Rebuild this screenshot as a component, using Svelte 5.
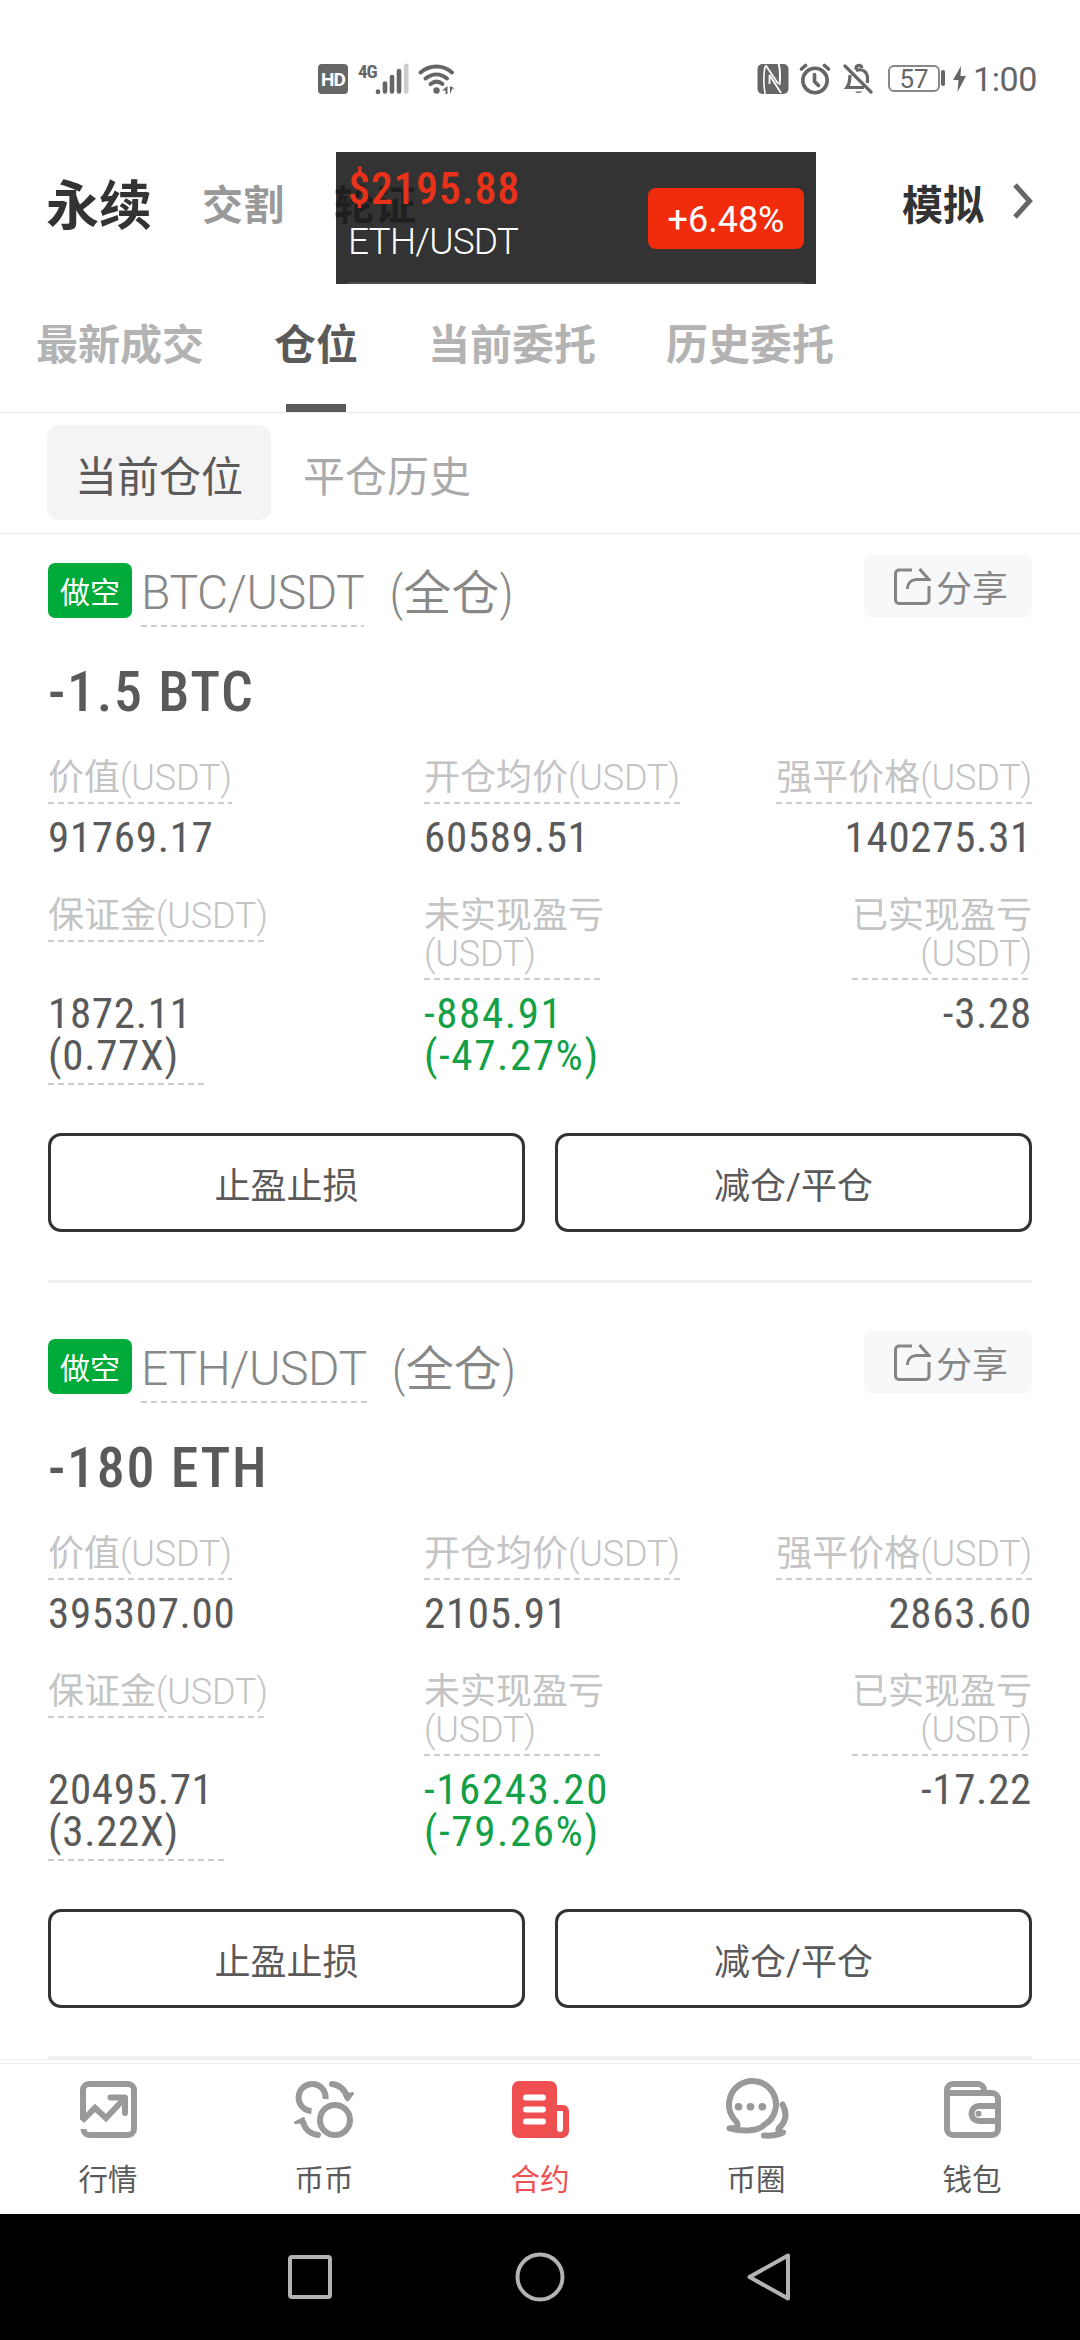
<script lang="ts">
  interface Field {
    label: string;
    wrap?: boolean;
    value: string;
    extra?: string;
    line?: number;
    down?: boolean;
  }

  interface Position {
    pair: string;
    size: string;
    fields: Field[];
  }

  const positions: Position[] = [
    {
      pair: 'BTC/USDT',
      size: '-1.5 BTC',
      fields: [
        { label: '价值', value: '91769.17' },
        { label: '开仓均价', value: '60589.51' },
        { label: '强平价格', value: '140275.31' },
        { label: '保证金', value: '1872.11', extra: '(0.77X)', line: 157 },
        { label: '未实现盈亏', wrap: true, value: '-884.91', extra: '(-47.27%)', down: true },
        { label: '已实现盈亏', wrap: true, value: '-3.28' }
      ]
    },
    {
      pair: 'ETH/USDT',
      size: '-180 ETH',
      fields: [
        { label: '价值', value: '395307.00' },
        { label: '开仓均价', value: '2105.91' },
        { label: '强平价格', value: '2863.60' },
        { label: '保证金', value: '20495.71', extra: '(3.22X)', line: 176 },
        { label: '未实现盈亏', wrap: true, value: '-16243.20', extra: '(-79.26%)', down: true },
        { label: '已实现盈亏', wrap: true, value: '-17.22' }
      ]
    }
  ];

  const tabs = ['最新成交', '仓位', '当前委托', '历史委托'];
  const navItems = ['行情', '币币', '合约', '币圈', '钱包'];

  let activeTab = $state('仓位');
  let activeNav = $state('合约');
</script>

<div class="screen">
  <div class="status">
    <div class="status-left">
      <span class="hd">HD</span>
      <span class="net">4G</span>
      <svg class="signal" width="35" height="32" viewBox="0 0 35 32" fill="none" stroke-width="4.6" stroke-linecap="round">
        <path d="M3 28.5v.4M10 20.500v8M17 14v14.500M24 8v20.500" stroke="#666" />
        <path d="M31.200 2.800v25.700" stroke="#ccc" />
      </svg>
      <svg class="wifi" width="40" height="32" viewBox="0 0 40 32" fill="none" stroke="#666" stroke-width="4" stroke-linecap="round">
        <path d="M3.500 9.500C13 1.500 26 1.500 35 9.500M8.500 15.500c7-5.500 15-5.500 21.500 0M13.500 21c4-3 8.500-3 12 0" />
        <circle cx="19.500" cy="27.500" r="3.200" fill="#666" stroke="none" />
        <path d="M30.500 23v8h-2v-3.500h-3.500zM33 23l5 2.500h-2.500L33 31z" fill="#666" stroke="none" />
      </svg>
    </div>
    <div class="status-right">
      <svg width="32" height="32" viewBox="0 0 32 32" fill="none" stroke="#fff">
        <rect x=".5" y="1" width="31" height="30" rx="5" fill="#666" stroke="none" />
        <path d="M8 3.500C6.500 11 6.500 21 8 31" stroke-width="1.600" />
        <path d="M8.500 2L21 20.500" stroke-width="1.800" />
        <path d="M21.500 0C24 9 23 16 22.500 22" stroke-width="2" />
        <path d="M12.500 12L24 30M12.500 12v9" stroke-width="1.800" />
      </svg>
      <svg class="alarm" width="32" height="32" viewBox="0 0 32 32" fill="none" stroke="#666" stroke-width="3.600" stroke-linecap="round">
        <circle cx="16" cy="17.500" r="12.200" />
        <path d="M15.500 11.500v7l4 4M2.500 6l4-3.500M29.500 6l-4-3.500" />
      </svg>
      <svg class="bell" width="30" height="32" viewBox="0 0 30 32" fill="none" stroke="#666" stroke-width="3.200">
        <path d="M2 3l26 26" stroke-linecap="round" />
        <path d="M13 7.500c7-2.500 11.500 2 11.500 7.500v5M7 12c-.5 6 0 8.500-3 12.500h17M13 6.500c-.5-5 5.500-5.500 6-1.500" />
        <path d="M12 28.500a4 3 0 0 0 7 0z" fill="#666" stroke="none" />
      </svg>
      <span class="battery">57</span>
      <span class="nub"></span>
      <svg class="bolt" width="13" height="26" viewBox="0 0 13 26" fill="#666"><path d="M8 0L0 14h5.500L4.500 26 13 10H7.500z" /></svg>
      <span class="time">1:00</span>
    </div>
  </div>

  <div class="header">
    <span class="mode active">永续</span>
    <span class="mode">交割</span>
    <span class="mode">轮证</span>
    <span class="demo">模拟</span>
    <svg width="20" height="36" viewBox="0 0 20 36" fill="none" stroke="#666" stroke-width="5"><path d="M2 2l14.500 16L2 34" /></svg>

    <!-- Floating price ticker -->
    <div class="ticker">
      <div class="quote">
        <span class="price din">$2195.88</span>
        <span class="symbol">ETH/USDT</span>
      </div>
      <span class="change">+6.48%</span>
    </div>
  </div>

  <div class="tabs">
    {#each tabs as tab}
      <span class="tab" class:active={tab === activeTab}>{tab}</span>
    {/each}
  </div>

  <div class="subtabs">
    <span class="subtab active">当前仓位</span>
    <span class="subtab">平仓历史</span>
  </div>

  <div class="positions">
    {#each positions as position}
      <div class="card">
        <div class="title">
          <span class="side">做空</span>
          <span class="pair dashed">{position.pair}</span>
          <span class="margin-mode">(全仓)</span>
          <span class="share">
            <svg width="38" height="38" viewBox="0 0 38 38" fill="none" stroke="#858585" stroke-width="3">
              <path d="M19 3H6a3.500 3.500 0 0 0-3.500 3.500v26.500A3.500 3.500 0 0 0 6 36.500h26.500a3.500 3.500 0 0 0 3.500-3.500V19" />
              <path d="M14.500 22c0-6 4-9.500 9.500-9.500h12L26.500 2" />
            </svg>
            分享
          </span>
        </div>
        <div class="size din">{position.size}</div>
        <div class="fields">
          {#each position.fields as field}
            <div class="field">
              <div class="label dashed" class:wrap={field.wrap}>
                <span>{field.label}</span><span class="unit">(USDT)</span>
              </div>
              <div class="value din" class:down={field.down} class:dashed={field.line} style:width={field.line ? `${field.line}px` : null}>
                <div>{field.value}</div>
                {#if field.extra}
                  <div>{field.extra}</div>
                {/if}
              </div>
            </div>
          {/each}
        </div>
        <div class="actions">
          <span class="action">止盈止损</span>
          <span class="action">减仓/平仓</span>
        </div>
      </div>
    {/each}
  </div>

  <div class="navbar">
    {#each navItems as item, i}
      <div class="nav" class:active={item === activeNav}>
        <svg width="68" height="64" viewBox="0 0 68 64" fill="none" stroke="#999" stroke-width="6">
          {#if i === 0}
            <path d="M9 43V13a6 6 0 0 1 6-6h39a6 6 0 0 1 6 6v39a6 6 0 0 1-6 6H15a6 6 0 0 1-5.500-6" />
            <path d="M8 44l13-13 11 10 18-19" />
            <path d="M36.500 20.500H51V36" stroke-linecap="round" stroke-linejoin="round" />
          {:else if i === 1}
            <circle cx="45" cy="43" r="15" />
            <path d="M35.500 22A13.500 13.500 0 1 0 21.500 34" />
            <path d="M42 7c8 1 13 6 15 13M28 58c-8-1-13-6-15-13" stroke-linecap="round" />
            <path d="M54.500 18l8-1.500-5 6.500zM13.500 41.500l-8 4 7-.5z" fill="#999" stroke-width="3" stroke-linejoin="round" />
          {:else if i === 2}
            <path d="M13 4h31a7 7 0 0 1 7 7v17h6a6 6 0 0 1 6 6v20a7 7 0 0 1-7 7H13a7 7 0 0 1-7-7V11a7 7 0 0 1 7-7z" fill="#f04f52" stroke="none" />
            <path d="M51 34h6v18a3 3 0 0 1-6 0z" fill="#fff" stroke="none" />
            <path d="M20 20.500h17M20 32.500h17M20 44.500h17" stroke="#fff" stroke-linecap="round" />
          {:else if i === 3}
            <path d="M15 50c1-3 .5-4.500-3-8A23.500 23.500 0 1 1 42 48c-6 6-20 7-34.500 3.300 4 .2 6.500-.3 7.500-1.300z" stroke-linejoin="round" />
            <path d="M60.500 27.500c5 9 3.500 17-3.500 23.500-1.500 2.500 0 4.500 4 4.500-6 3-12 3.500-19 3" stroke-linecap="round" stroke-linejoin="round" />
            <path d="M16.500 29.700h.1M28.400 29.700h.1M40.300 29.700h.1" stroke-width="7.600" stroke-linecap="round" />
          {:else}
            <path d="M9 16h45a6 6 0 0 1 6 6v30a6 6 0 0 1-6 6H15a6 6 0 0 1-6-6V13a6 6 0 0 1 6-6h25a6 6 0 0 1 6 6v3" />
            <path d="M60 29H41a7.500 7.500 0 0 0 0 15h19" />
            <circle cx="40.500" cy="36.700" r="3" fill="#999" stroke="none" />
          {/if}
        </svg>
        <span>{item}</span>
      </div>
    {/each}
  </div>

  <div class="system">
    <svg width="50" height="50" viewBox="0 0 50 50"><rect x="5" y="5" width="40" height="40" rx="2" /></svg>
    <svg width="50" height="50" viewBox="0 0 50 50"><circle cx="25" cy="25" r="22.500" /></svg>
    <svg width="50" height="50" viewBox="0 0 50 50"><path d="M43 3.500v43L4.500 25z" stroke-linejoin="round" /></svg>
  </div>
</div>

<style>
  :global(body) {
    background: #fff;
  }

  .screen {
    display: flex;
    flex-direction: column;
    width: 1080px;
    height: 2340px;
    overflow: hidden;
    font-family: Roboto, 'Noto Sans CJK SC', sans-serif;
    font-weight: 400;
    color: #5a5a5a;
    white-space: nowrap;
  }

  .din {
    font-stretch: 75%;
    letter-spacing: 0.7px;
  }

  svg {
    display: block;
    flex: none;
  }

  .dashed {
    background: repeating-linear-gradient(90deg, #ccc 0 6px, transparent 6px 10px) left bottom / 100% 2px no-repeat;
  }

  .status {
    display: flex;
    justify-content: space-between;
    height: 106px;
    padding: 63px 44px 0 318px;
    box-sizing: border-box;
    color: #666;
  }

  .status-left,
  .status-right {
    display: flex;
    align-items: flex-start;
  }

  .hd {
    width: 30px;
    height: 30px;
    margin-top: 1px;
    border-radius: 4px;
    background: #666;
    color: #fff;
    font-size: 19px;
    font-weight: 700;
    line-height: 31px;
    text-align: center;
    letter-spacing: -1px;
  }

  .net {
    width: 16px;
    margin-left: 10px;
    font-size: 19px;
    font-weight: 700;
    line-height: 17px;
    letter-spacing: -1px;
    font-stretch: 75%;
  }

  .signal {
    margin-left: 1px;
  }

  .wifi {
    margin-left: 7px;
  }

  .alarm {
    margin-left: 10px;
  }

  .bell {
    margin-left: 12px;
  }

  .battery {
    width: 48px;
    height: 23px;
    margin: 2px 0 0 15px;
    border: 2px solid #888;
    border-radius: 6px;
    font-size: 26px;
    line-height: 25px;
    text-align: center;
  }

  .nub {
    width: 4px;
    height: 16px;
    margin: 7px 0 0 1px;
    border-radius: 2px;
    background: #666;
  }

  .bolt {
    margin: 3px 0 0 8px;
  }

  .time {
    margin: 0 -1px 0 7px;
    font-size: 34px;
    line-height: 33px;
    letter-spacing: -0.4px;
  }

  .header {
    position: relative;
    display: flex;
    align-items: center;
    height: 196px;
    padding: 0 47px 0 46px;
  }

  .mode {
    margin: -5px 50px 0 0;
    font-size: 41px;
    font-weight: 700;
    color: #999;
  }

  .mode.active {
    font-size: 53px;
    color: #333;
  }

  .demo {
    margin: -5px 29px 0 auto;
    font-size: 41px;
    font-weight: 700;
    color: #333;
  }

  .header > svg {
    margin-top: -6px;
  }

  .ticker {
    position: absolute;
    top: 46px;
    left: 336px;
    display: flex;
    align-items: center;
    justify-content: space-between;
    width: 480px;
    height: 132px;
    padding: 0 12px;
    box-sizing: border-box;
    background: linear-gradient(#4c4c4c, #4c4c4c) center bottom / 456px 2px no-repeat, rgba(0, 0, 0, 0.8);
    color: #fff;
  }

  .quote {
    display: flex;
    flex-direction: column;
    height: 100%;
  }

  .price {
    margin-top: 11px;
    font-size: 44px;
    font-weight: 500;
    line-height: 52px;
    color: #e93219;
  }

  .symbol {
    font-size: 37px;
    font-weight: 300;
    line-height: 54px;
    letter-spacing: -0.8px;
  }

  .change {
    width: 156px;
    height: 61px;
    border-radius: 8px;
    background: #f02c0c;
    font-size: 36px;
    line-height: 64px;
    text-align: center;
  }

  .tabs {
    display: flex;
    gap: 70px;
    height: 110px;
    padding-left: 36px;
    border-bottom: 1px solid #eaeaea;
  }

  .tab {
    display: flex;
    flex-direction: column;
    align-items: center;
    justify-content: space-between;
    font-size: 42px;
    font-weight: 700;
    line-height: 88px;
    color: #b3b3b3;
  }

  .tab.active {
    color: #5a5a5a;
  }

  .tab.active::after {
    content: '';
    width: 60px;
    height: 8px;
    background: #5a5a5a;
  }

  .subtabs {
    display: flex;
    gap: 4px;
    height: 95px;
    padding: 12px 47px 13px;
    border-bottom: 1px solid #ebebeb;
  }

  .subtab {
    padding: 0 28px;
    border-radius: 12px;
    font-size: 42px;
    line-height: 105px;
    color: #aaa;
  }

  .subtab.active {
    background: #f4f4f4;
    color: #5a5a5a;
  }

  .positions {
    flex: 1;
    padding: 21px 48px 0;
    overflow: hidden;
  }

  .card {
    border-bottom: 3px solid #f0f0f0;
  }

  .card + .card {
    margin-top: 48px;
  }

  .title {
    display: flex;
    height: 72px;
    color: #888;
  }

  .side {
    width: 84px;
    height: 55px;
    margin: 8px 9px 0 0;
    border-radius: 7px;
    background: #00aa3b;
    color: #fff;
    font-size: 30px;
    line-height: 60px;
    text-align: center;
  }

  .pair {
    height: 72px;
    font-size: 48px;
    font-weight: 300;
    line-height: 75px;
    letter-spacing: -0.4px;
  }

  .margin-mode {
    margin-left: 25px;
    font-size: 48px;
    font-stretch: 75%;
    font-weight: 350;
    line-height: 77px;
  }

  .share {
    display: flex;
    align-items: center;
    gap: 5px;
    width: 139px;
    height: 62px;
    margin-left: auto;
    padding-left: 29px;
    border-radius: 8px;
    background: #f6f8fa;
    font-size: 36px;
  }

  .size {
    font-size: 56px;
    font-weight: 500;
    line-height: 130px;
    height: 128px;
    letter-spacing: 1.7px;
  }

  .fields {
    display: grid;
    grid-template-columns: 376px 1fr 300px;
    row-gap: 39px;
    padding-top: 4px;
  }

  .field {
    display: flex;
    flex-direction: column;
    align-items: flex-start;
    justify-content: space-between;
  }

  .field:nth-child(3n) {
    align-items: flex-end;
    text-align: right;
  }

  .field:nth-child(n + 5) {
    justify-content: flex-start;
  }

  .label {
    display: flex;
    padding-bottom: 7px;
    font-size: 36px;
    line-height: 38px;
    color: #c4c4c4;
  }

  .label.wrap,
  .label.wrap span {
    display: block;
  }

  .unit {
    font-weight: 300;
    letter-spacing: -0.2px;
  }

  .value {
    margin-top: 12px;
    font-size: 43px;
    line-height: 42px;
  }

  .value.dashed,
  .value.down {
    padding-bottom: 9px;
  }

  .value.down {
    color: #13a047;
    letter-spacing: 1.6px;
  }

  .actions {
    display: grid;
    grid-template-columns: 1fr 1fr;
    gap: 30px;
    padding: 48px 0;
  }

  .action {
    height: 93px;
    border: 3px solid #333;
    border-radius: 13px;
    font-size: 36px;
    line-height: 102px;
    text-align: center;
  }

  .navbar {
    position: relative;
    display: flex;
    height: 150px;
    margin-top: 3px;
    border-top: 1px solid #eee;
    background: #fff;
  }

  .navbar::before {
    content: '';
    position: absolute;
    top: -5px;
    width: 100%;
    height: 1px;
    background: #eee;
  }

  .nav {
    display: flex;
    flex: 1;
    flex-direction: column;
    align-items: center;
    padding-top: 13px;
    font-size: 29.5px;
    line-height: 78px;
  }

  .nav.active {
    color: #f04f52;
  }

  .system {
    display: flex;
    align-items: center;
    justify-content: center;
    gap: 180px;
    height: 126px;
    background: #000;
  }

  .system svg {
    fill: none;
    stroke: #b3b3b3;
    stroke-width: 4;
  }
</style>
